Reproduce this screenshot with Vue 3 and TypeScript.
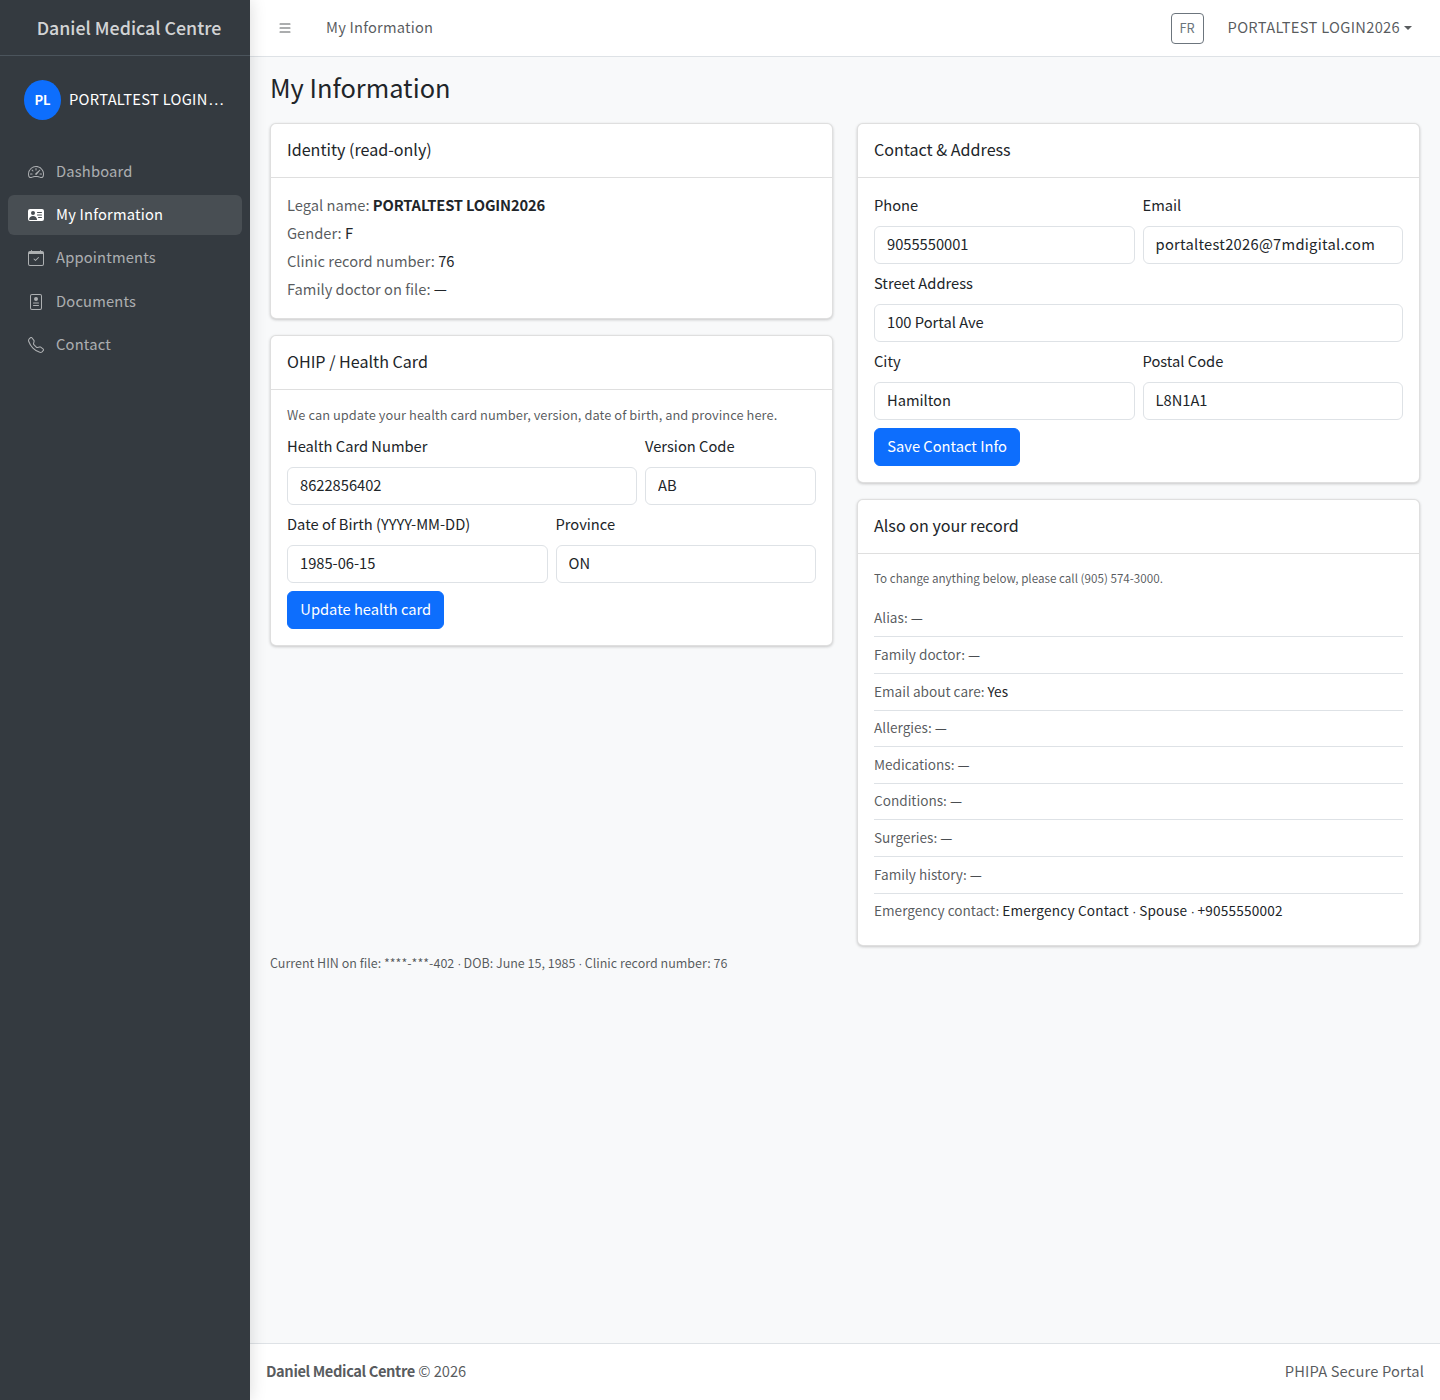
<script setup lang="ts">
interface NavItem {
  label: string
  icon: string
  active?: boolean
}

const navItems: NavItem[] = [
  { label: 'Dashboard', icon: 'speedometer' },
  { label: 'My Information', icon: 'vcard', active: true },
  { label: 'Appointments', icon: 'calendar' },
  { label: 'Documents', icon: 'file' },
  { label: 'Contact', icon: 'phone' },
]

const identity = [
  { label: 'Legal name:', value: 'PORTALTEST LOGIN2026', bold: true },
  { label: 'Gender:', value: 'F' },
  { label: 'Clinic record number:', value: '76' },
  { label: 'Family doctor on file:', value: '—' },
]

const record = [
  { label: 'Alias:', parts: ['—'] },
  { label: 'Family doctor:', parts: ['—'] },
  { label: 'Email about care:', parts: ['Yes'] },
  { label: 'Allergies:', parts: ['—'] },
  { label: 'Medications:', parts: ['—'] },
  { label: 'Conditions:', parts: ['—'] },
  { label: 'Surgeries:', parts: ['—'] },
  { label: 'Family history:', parts: ['—'] },
  { label: 'Emergency contact:', parts: ['Emergency Contact', 'Spouse', '+9055550002'] },
]

const fileNote = ['Current HIN on file: ****-***-402', 'DOB: June 15, 1985', 'Clinic record number: 76']
</script>

<template>
  <div class="app">
    <aside class="sidebar">
      <div class="brand">Daniel Medical Centre</div>
      <div class="user">
        <div class="avatar">PL</div>
        <div class="user-name"><span>PORTALTEST LOGIN2026</span></div>
      </div>
      <nav class="nav">
        <a v-for="item in navItems" :key="item.label" class="nav-link" :class="{ active: item.active }">
          <svg class="nav-icon" viewBox="0 0 16 16" fill="currentColor">
            <template v-if="item.icon === 'speedometer'">
              <path d="M8 4a.5.5 0 0 1 .5.5V6a.5.5 0 0 1-1 0V4.500A.5.5 0 0 1 8 4M3.732 5.732a.5.5 0 0 1 .707 0l.915.914a.5.5 0 1 1-.708.708l-.914-.915a.5.5 0 0 1 0-.707M2 10a.5.5 0 0 1 .5-.5h1.586a.5.5 0 0 1 0 1H2.500A.5.5 0 0 1 2 10m9.500 0a.5.5 0 0 1 .5-.5h1.500a.5.5 0 0 1 0 1H12a.5.5 0 0 1-.5-.5m.754-4.246a.39.39 0 0 0-.527-.02L7.547 9.310a.91.91 0 1 0 1.302 1.258l3.434-4.297a.39.39 0 0 0-.029-.518z" />
              <path fill-rule="evenodd" d="M0 10a8 8 0 1 1 15.547 2.661c-.442 1.253-1.845 1.602-2.932 1.250C11.309 13.488 9.475 13 8 13c-1.474 0-3.310.488-4.615.911-1.087.352-2.490.003-2.932-1.250A8 8 0 0 1 0 10m8-7a7 7 0 0 0-6.603 9.329c.203.575.923.876 1.680.63C4.397 12.533 6.358 12 8 12s3.604.532 4.923.96c.757.245 1.477-.056 1.680-.631A7 7 0 0 0 8 3" />
            </template>
            <path v-else-if="item.icon === 'vcard'" d="M0 4a2 2 0 0 1 2-2h12a2 2 0 0 1 2 2v8a2 2 0 0 1-2 2H2a2 2 0 0 1-2-2zm9 1.500a.5.5 0 0 0 .5.5h4a.5.5 0 0 0 0-1h-4a.5.5 0 0 0-.5.5M9 8a.5.5 0 0 0 .5.5h4a.5.5 0 0 0 0-1h-4A.5.5 0 0 0 9 8m1 2.500a.5.5 0 0 0 .5.5h3a.5.5 0 0 0 0-1h-3a.5.5 0 0 0-.5.5m-1 2C9 10.567 7.210 9 5 9c-2.086 0-3.800 1.398-3.984 3.181A1 1 0 0 0 2 13h6.960q.04-.245.04-.5M7 6a2 2 0 1 0-4 0 2 2 0 0 0 4 0" />
            <template v-else-if="item.icon === 'calendar'">
              <path d="M10.854 7.146a.5.5 0 0 1 0 .708l-3 3a.5.5 0 0 1-.708 0l-1.500-1.500a.5.5 0 1 1 .708-.708L7.500 9.793l2.646-2.647a.5.5 0 0 1 .708 0" />
              <path d="M3.500 0a.5.5 0 0 1 .5.5V1h8V.5a.5.5 0 0 1 1 0V1h1a2 2 0 0 1 2 2v11a2 2 0 0 1-2 2H2a2 2 0 0 1-2-2V3a2 2 0 0 1 2-2h1V.5a.5.5 0 0 1 .5-.5M1 4v10a1 1 0 0 0 1 1h12a1 1 0 0 0 1-1V4z" />
            </template>
            <template v-else-if="item.icon === 'file'">
              <path d="M12 0H4a2 2 0 0 0-2 2v12a2 2 0 0 0 2 2h8a2 2 0 0 0 2-2V2a2 2 0 0 0-2-2M4 1h8a1 1 0 0 1 1 1v12a1 1 0 0 1-1 1H4a1 1 0 0 1-1-1V2a1 1 0 0 1 1-1" />
              <path d="M8 7a2 2 0 1 0 0-4 2 2 0 0 0 0 4M5.500 8.500a.5.5 0 0 0 0 1h5a.5.5 0 0 0 0-1zM5.500 11a.5.5 0 0 0 0 1h5a.5.5 0 0 0 0-1z" />
            </template>
            <path v-else d="M3.654 1.328a.678.678 0 0 0-1.015-.063L1.605 2.300c-.483.484-.661 1.169-.45 1.770a17.600 17.600 0 0 0 4.168 6.608 17.600 17.600 0 0 0 6.608 4.168c.601.211 1.286.033 1.770-.45l1.034-1.034a.678.678 0 0 0-.063-1.015l-2.307-1.794a.68.68 0 0 0-.58-.122l-2.190.547a1.750 1.750 0 0 1-1.657-.459L5.482 8.062a1.750 1.750 0 0 1-.46-1.657l.548-2.190a.68.68 0 0 0-.122-.58zM1.884.511a1.745 1.745 0 0 1 2.612.163L6.290 2.980c.329.423.445.974.315 1.494l-.547 2.190a.68.68 0 0 0 .178.643l2.457 2.457a.68.68 0 0 0 .644.178l2.189-.547a1.750 1.750 0 0 1 1.494.315l2.306 1.794c.829.645.905 1.870.163 2.611l-1.034 1.034c-.74.74-1.846 1.065-2.877.702a18.600 18.600 0 0 1-7.010-4.420 18.600 18.600 0 0 1-4.420-7.009c-.362-1.030-.037-2.137.703-2.877z" />
          </svg>
          <span class="nav-text">{{ item.label }}</span>
        </a>
      </nav>
    </aside>

    <div class="main">
      <header class="topbar">
        <svg class="menu-icon" viewBox="0 0 16 16" fill="currentColor">
          <path fill-rule="evenodd" d="M2.500 12a.5.5 0 0 1 .5-.5h10a.5.5 0 0 1 0 1H3a.5.5 0 0 1-.5-.5m0-4a.5.5 0 0 1 .5-.5h10a.5.5 0 0 1 0 1H3a.5.5 0 0 1-.5-.5m0-4a.5.5 0 0 1 .5-.5h10a.5.5 0 0 1 0 1H3a.5.5 0 0 1-.5-.5" />
        </svg>
        <span class="crumb">My Information</span>
        <button class="lang-btn" type="button">FR</button>
        <span class="user-menu">PORTALTEST LOGIN2026<i class="caret"></i></span>
      </header>

      <main class="content">
        <h3 class="page-title">My Information</h3>
        <div class="columns">
          <div class="col">
            <section class="card">
              <div class="card-header">Identity (read-only)</div>
              <div class="card-body">
                <div v-for="row in identity" :key="row.label" class="id-line">
                  <span class="muted">{{ row.label }}</span>
                  {{ ' ' }}
                  <strong v-if="row.bold" class="strong">{{ row.value }}</strong>
                  <span v-else>{{ row.value }}</span>
                </div>
              </div>
            </section>

            <section class="card">
              <div class="card-header">OHIP / Health Card</div>
              <div class="card-body">
                <p class="hint">We can update your health card number, version, date of birth, and province here.</p>
                <div class="form-grid">
                  <div class="span-8">
                    <label>Health Card Number</label>
                    <input class="input" type="text" value="8622856402" />
                  </div>
                  <div class="span-4">
                    <label>Version Code</label>
                    <input class="input" type="text" value="AB" />
                  </div>
                  <div class="span-6">
                    <label>Date of Birth (YYYY-MM-DD)</label>
                    <input class="input" type="text" value="1985-06-15" />
                  </div>
                  <div class="span-6">
                    <label>Province</label>
                    <input class="input" type="text" value="ON" />
                  </div>
                  <div class="span-12">
                    <button class="btn" type="button">Update health card</button>
                  </div>
                </div>
              </div>
            </section>
          </div>

          <div class="col">
            <section class="card">
              <div class="card-header">Contact &amp; Address</div>
              <div class="card-body">
                <div class="form-grid">
                  <div class="span-6">
                    <label>Phone</label>
                    <input class="input" type="text" value="9055550001" />
                  </div>
                  <div class="span-6">
                    <label>Email</label>
                    <input class="input input-email" type="text" value="portaltest2026@7mdigital.com" />
                  </div>
                  <div class="span-12">
                    <label>Street Address</label>
                    <input class="input" type="text" value="100 Portal Ave" />
                  </div>
                  <div class="span-6">
                    <label>City</label>
                    <input class="input" type="text" value="Hamilton" />
                  </div>
                  <div class="span-6">
                    <label>Postal Code</label>
                    <input class="input" type="text" value="L8N1A1" />
                  </div>
                  <div class="span-12">
                    <button class="btn" type="button">Save Contact Info</button>
                  </div>
                </div>
              </div>
            </section>

            <section class="card">
              <div class="card-header">Also on your record</div>
              <div class="card-body">
                <p class="call-note">To change anything below, please call (905) 574-3000.</p>
                <div v-for="row in record" :key="row.label" class="record-row">
                  <span class="muted">{{ row.label }}</span>
                  {{ ' ' }}
                  <template v-for="(part, i) in row.parts" :key="part">
                    <span v-if="i > 0" class="dot">&nbsp;·&nbsp;</span><span :class="{ spaced: row.parts.length > 1 }">{{ part }}</span>
                  </template>
                </div>
              </div>
            </section>
          </div>
        </div>
        <p class="file-note">
          <template v-for="(part, i) in fileNote" :key="part">
            <span v-if="i > 0" class="dot">&nbsp;·&nbsp;</span><span>{{ part }}</span>
          </template>
        </p>
      </main>

      <footer class="footer">
        <span><strong class="footer-brand">Daniel Medical Centre</strong> © 2026</span>
        <span class="footer-right">PHIPA Secure Portal</span>
      </footer>
    </div>
  </div>
</template>

<style>
body {
  margin: 0;
}
</style>

<style scoped>
.app {
  display: flex;
  min-height: 1400px;
  font-family: "Noto Sans CJK KR", "Noto Sans", sans-serif;
  font-size: 14.7px;
  line-height: 24px;
  color: #212529;
}

.sidebar {
  width: 250px;
  flex: none;
  background: #343a40;
  box-shadow: 0 0 16px rgba(0, 0, 0, 0.15);
  position: relative;
  z-index: 2;
}

.brand {
  height: 53px;
  padding: 0 0 2px 8px;
  border-bottom: 1px solid #4b545c;
  display: flex;
  align-items: center;
  justify-content: center;
  font-size: 17.8px;
  font-weight: 500;
  color: rgba(255, 255, 255, 0.8);
}

.user {
  display: flex;
  align-items: center;
  gap: 8px;
  padding: 24px;
}

.avatar {
  width: 37px;
  height: 40px;
  flex: none;
  border-radius: 50%;
  background: #0d6efd;
  color: #fff;
  font-size: 13px;
  font-weight: 700;
  display: flex;
  align-items: center;
  justify-content: center;
}

/* outer font sets the ellipsis glyph, inner span the text */
.user-name {
  min-width: 0;
  padding-bottom: 2px;
  color: #fff;
  font-family: "Liberation Sans", sans-serif;
  font-size: 17px;
  white-space: nowrap;
  overflow: hidden;
  text-overflow: ellipsis;
}

.user-name span {
  font-family: "Noto Sans CJK KR", sans-serif;
  font-size: 14.7px;
  letter-spacing: 0.3px;
}

.nav {
  display: flex;
  flex-direction: column;
  gap: 3.2px;
  padding: 8px 8px 0;
}

.nav-link {
  display: flex;
  align-items: center;
  gap: 12px;
  height: 40px;
  padding: 0 20px;
  border-radius: 6px;
  color: rgba(255, 255, 255, 0.6);
}

.nav-link.active {
  background: rgba(255, 255, 255, 0.1);
  color: #fff;
}

.nav-icon {
  width: 16px;
  height: 16px;
  flex: none;
}

.nav-text {
  padding-bottom: 2px;
  letter-spacing: 0.2px;
}

.main {
  flex: 1;
  min-width: 0;
  display: flex;
  flex-direction: column;
  background: #f8f9fa;
}

.topbar {
  height: 56px;
  flex: none;
  display: flex;
  align-items: center;
  background: #fff;
  border-bottom: 1px solid #dee2e6;
  padding: 0 28px 0 27px;
  color: rgba(33, 37, 41, 0.75);
}

.menu-icon {
  width: 16px;
  height: 16px;
}

.crumb {
  margin-left: 33px;
  padding-bottom: 2px;
  letter-spacing: 0.2px;
}

.lang-btn {
  margin-left: auto;
  width: 33px;
  height: 31px;
  padding: 0;
  border: 1px solid #6c757d;
  border-radius: 4px;
  background: transparent;
  color: #6c757d;
  font: inherit;
  font-size: 12.8px;
}

.user-menu {
  margin-left: 24px;
  padding-bottom: 2px;
  display: flex;
  align-items: center;
  letter-spacing: 0.3px;
}

.caret {
  margin: 2px 0 0 4px;
  border-top: 4.8px solid currentColor;
  border-left: 4.8px solid transparent;
  border-right: 4.8px solid transparent;
}

.content {
  flex: 1;
  padding: 14px 20px 0;
}

.page-title {
  margin: 0 0 18px;
  font-size: 25.4px;
  font-weight: 400;
  line-height: 33.6px;
}

.columns {
  display: grid;
  grid-template-columns: 1fr 1fr;
  gap: 24px;
}

.col {
  display: flex;
  flex-direction: column;
  gap: 16px;
  min-width: 0;
}

.card {
  background: #fff;
  border-radius: 6px;
  border: 1px solid rgba(0, 0, 0, 0.125);
  box-shadow: 0 1px 3px rgba(0, 0, 0, 0.2);
}

.card-header {
  height: 51px;
  padding: 0 16px 2px;
  display: flex;
  align-items: center;
  border-bottom: 1px solid rgba(0, 0, 0, 0.125);
  font-size: 16.1px;
}

.card-body {
  padding: 16px;
}

.id-line {
  line-height: 22px;
  padding-bottom: 2px;
  margin-bottom: 4px;
}

.id-line:last-child {
  margin-bottom: 0;
}

.muted {
  color: rgba(33, 37, 41, 0.75);
}

.strong {
  font-weight: 700;
  letter-spacing: -0.15px;
}

.hint {
  margin: 0 0 12px;
  font-size: 12.85px;
  line-height: 17px;
  letter-spacing: 0.05px;
  color: rgba(33, 37, 41, 0.75);
}

.form-grid {
  display: grid;
  grid-template-columns: repeat(12, minmax(0, 1fr));
  gap: 8px;
}

.span-4 {
  grid-column: span 4;
}

.span-6 {
  grid-column: span 6;
}

.span-8 {
  grid-column: span 8;
}

.span-12 {
  grid-column: span 12;
}

label {
  display: block;
  line-height: 22px;
  margin-bottom: 10px;
}

.input {
  display: block;
  width: 100%;
  height: 38px;
  box-sizing: border-box;
  padding: 5px 12px 7px;
  border: 1px solid #dee2e6;
  border-radius: 6px;
  background: #fff;
  color: #212529;
  font: inherit;
  outline: none;
}

.input-email {
  letter-spacing: 0.28px;
}

.btn {
  display: block;
  height: 38px;
  padding: 0 12.3px 2px;
  border: 1px solid #0d6efd;
  border-radius: 6px;
  background: #0d6efd;
  color: #fff;
  font: inherit;
}

.call-note {
  margin: -2px 0 14.05px;
  font-size: 11.65px;
  line-height: 19.2px;
  color: rgba(33, 37, 41, 0.75);
}

.record-row {
  padding: 6.5px 0 7.5px;
  font-size: 13.6px;
  line-height: 21.6px;
  border-bottom: 1px solid #dee2e6;
}

.record-row:last-child {
  border-bottom: 0;
}

.spaced {
  letter-spacing: 0.2px;
}

.dot {
  font-family: "Liberation Sans", sans-serif;
  letter-spacing: -0.6px;
  line-height: 0;
}

.file-note {
  margin: 7px 0 0;
  font-size: 12.5px;
  line-height: 20.4px;
  color: rgba(33, 37, 41, 0.75);
}

.footer {
  height: 54px;
  flex: none;
  display: flex;
  align-items: center;
  justify-content: space-between;
  padding: 0 16px 2px;
  background: #fff;
  border-top: 1px solid #dee2e6;
  color: rgba(33, 37, 41, 0.75);
}

.footer-brand {
  letter-spacing: -0.4px;
}

.footer-right {
  letter-spacing: 0.15px;
}
</style>
